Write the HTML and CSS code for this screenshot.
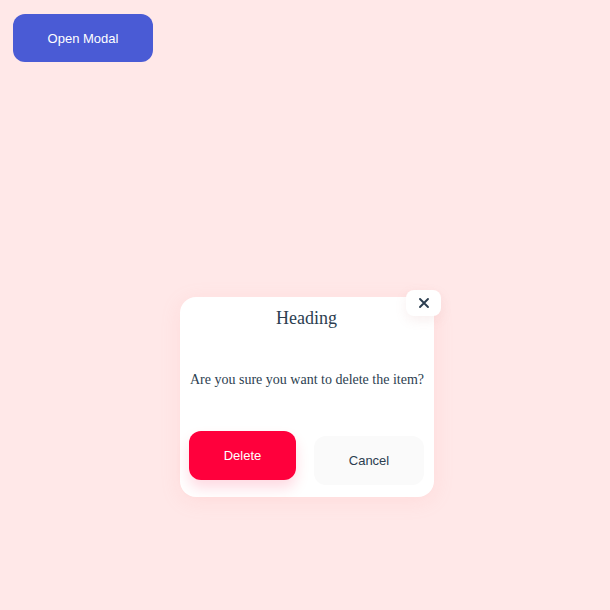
FILE: index.html
```html
<!DOCTYPE html>
<html>
<head>
<meta charset="utf-8">
<link rel="stylesheet" href="styles.css">
</head>
<body>
<button class="open-btn">Open Modal</button>
<div class="modal">
  <button class="close-btn" aria-label="Close">
    <svg width="12" height="12" viewBox="0 0 12 12"><path d="M2 2 L10 10 M10 2 L2 10" stroke="#2c3e50" stroke-width="1.9" stroke-linecap="round"/></svg>
  </button>
  <h2 class="heading">Heading</h2>
  <p class="message">Are you sure you want to delete the item?</p>
  <div class="actions">
    <button class="btn delete">Delete</button>
    <button class="btn cancel">Cancel</button>
  </div>
</div>
</body>
</html>
```
FILE: styles.css
```css
html, body {
  margin: 0;
  padding: 0;
  background: #ffe8e8;
  height: 100%;
}
body {
  padding: 14px 13px;
  box-sizing: border-box;
  font-family: "Liberation Serif", serif;
  position: relative;
}
.open-btn {
  width: 140px;
  height: 48px;
  border: none;
  border-radius: 12px;
  background: #4a5bd5;
  color: #fff;
  font-family: "Liberation Sans", Arial, sans-serif;
  font-size: 13px;
  display: block;
}
.modal {
  position: absolute;
  left: 180px;
  top: 297px;
  width: 254px;
  height: 200px;
  box-sizing: border-box;
  background: #fff;
  border-radius: 16px;
  padding: 10px 10px 12px 9px;
  display: flex;
  flex-direction: column;
  box-shadow: 0 4px 20px rgba(255, 150, 150, 0.15);
}
.close-btn {
  position: absolute;
  top: -7px;
  right: -7px;
  width: 35px;
  height: 26px;
  border: none;
  border-radius: 8px;
  background: #fff;
  display: flex;
  align-items: center;
  justify-content: center;
  padding: 0;
  box-shadow: 0 4px 12px rgba(200, 120, 120, 0.12);
}
.heading {
  margin: 0;
  font-size: 18px;
  font-weight: normal;
  line-height: 22px;
  text-align: center;
  color: #2c3e50;
}
.message {
  margin: 42px 0 0 1px;
  font-size: 14px;
  line-height: 18px;
  white-space: nowrap;
  color: #2c3e50;
}
.actions {
  margin-top: 42px;
  display: flex;
  align-items: flex-start;
  justify-content: space-between;
}
.btn {
  border: none;
  border-radius: 12px;
  font-family: "Liberation Sans", Arial, sans-serif;
  font-size: 13px;
  height: 49px;
}
.delete {
  width: 107px;
  background: #ff003c;
  color: #fff;
  box-shadow: 0 8px 14px rgba(255, 0, 60, 0.15);
}
.cancel {
  width: 110px;
  margin-top: 5px;
  background: #fafafa;
  color: #2c3e50;
}
```
